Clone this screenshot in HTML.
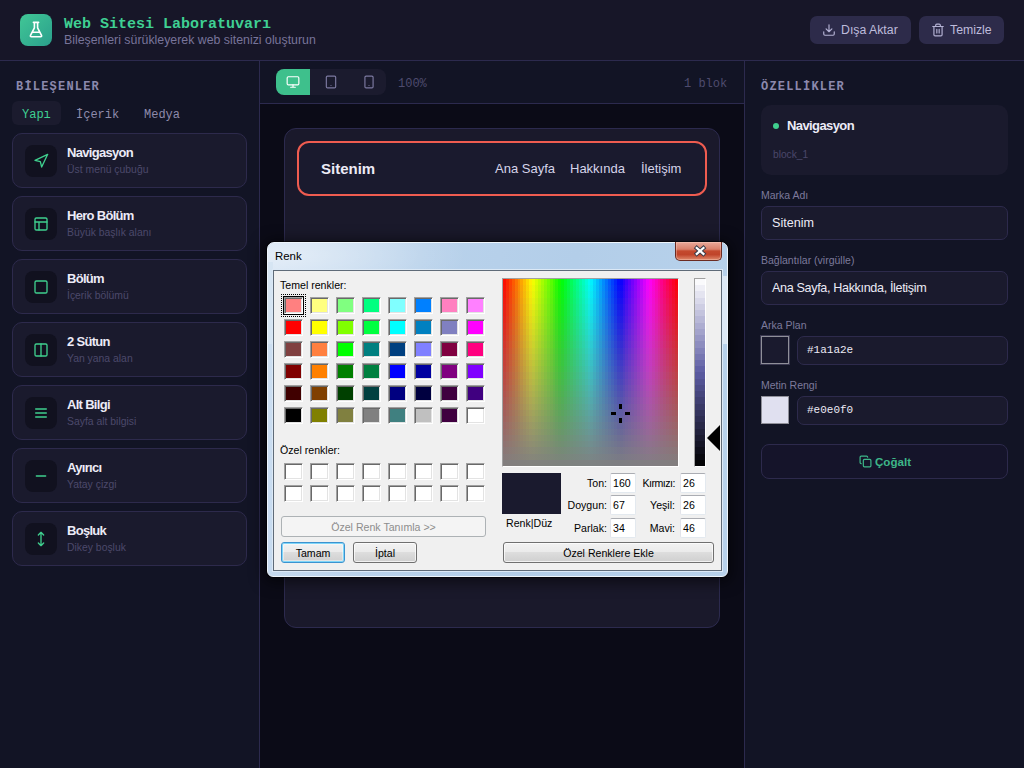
<!DOCTYPE html>
<html><head><meta charset="utf-8">
<style>
*{box-sizing:border-box;margin:0;padding:0}
html,body{width:1024px;height:768px;overflow:hidden;background:#0b0b17;font-family:"Liberation Sans",sans-serif}
.abs{position:absolute}
#hdr{position:absolute;left:0;top:0;width:1024px;height:61px;background:#171628;border-bottom:1px solid #2c2a4e}
#logo{position:absolute;left:20px;top:14px;width:32px;height:32px;border-radius:8px;background:linear-gradient(135deg,#41c796,#2a9f8c)}
#title{position:absolute;left:64px;top:15px;font-family:"Liberation Mono",monospace;font-weight:700;font-size:15px;color:#3fd093;line-height:20px;white-space:nowrap}
#sub{position:absolute;left:64px;top:32px;font-size:12.35px;color:#77749a;line-height:16px;white-space:nowrap}
.hbtn{position:absolute;top:16px;height:28px;border-radius:7px;background:#2d2b4a;color:#bebcdc;font-size:12.3px;line-height:28px;white-space:nowrap}
#left{position:absolute;left:0;top:61px;width:260px;height:707px;background:#121425;border-right:1px solid #2c2a4e}
.sect{position:absolute;font-family:"Liberation Mono",monospace;font-weight:700;font-size:12px;letter-spacing:1.2px;color:#8c89ad;line-height:14px;white-space:nowrap}
.tab{position:absolute;top:40px;height:24px;font-family:"Liberation Mono",monospace;font-size:12px;line-height:28px;color:#8e8bab;white-space:nowrap}
.card{position:absolute;left:12px;width:235px;height:55px;border:1px solid #2d2a4c;border-radius:10px;background:#1a1a2d}
.ibox{position:absolute;left:12px;top:11px;width:32px;height:32px;border-radius:8px;background:#11111f}
.ibox svg{position:absolute;left:8px;top:8px}
.ct{position:absolute;left:54px;top:11px;font-size:13px;font-weight:700;color:#ecebf7;letter-spacing:-0.7px;line-height:16px;white-space:nowrap}
.cs{position:absolute;left:54px;top:29px;font-size:10.4px;color:#4c496b;line-height:13px;white-space:nowrap}
#tool{position:absolute;left:260px;top:61px;width:484px;height:43px;background:#121425;border-bottom:1px solid #2c2a4e}
#canvas{position:absolute;left:260px;top:104px;width:484px;height:664px;background:#0b0b17}
#frame{position:absolute;left:284px;top:128px;width:436px;height:500px;border:1px solid #2c2a4e;border-radius:12px;background:#1a192b}
#nav{position:absolute;left:297px;top:141px;width:410px;height:55px;border:2px solid #ef5c50;border-radius:12px;background:#1a1a2e}
#right{position:absolute;left:744px;top:61px;width:280px;height:707px;background:#121425;border-left:1px solid #2c2a4e}
.lbl{position:absolute;left:16px;font-size:10.5px;color:#7d7a9c;line-height:13px;white-space:nowrap}
.inp{position:absolute;left:16px;width:247px;height:34px;border:1px solid #2d2a4c;border-radius:7px;background:#1a1a2d;color:#eceaf6;font-size:12.6px;line-height:32px;padding-left:10px;white-space:nowrap}

#dlg{position:absolute;left:0;top:0;width:1024px;height:768px;pointer-events:none}
#dlg .f{position:absolute;left:267px;top:242px;width:461px;height:335px;border-radius:7px 7px 6px 6px;background:linear-gradient(100deg,#cfe0f2 0%,#b9d2eb 30%,#b3cee9 60%,#b8d2eb 100%);box-shadow:0 0 0 1px rgba(0,0,0,.55),0 2px 14px 4px rgba(0,0,0,.5);border:1px solid #eef5fc}
#dlg .cl{position:absolute;left:273px;top:270px;width:449px;height:301px;background:#f0f0f0;border:1px solid #5f6b78;box-shadow:0 0 0 1px #dce9f6}
#dlg .t{position:absolute;font-family:"Liberation Sans",sans-serif;font-size:10.6px;line-height:12px;color:#000;white-space:nowrap}
#dlg .sw{position:absolute;display:block;width:19px;height:17px;border:1px solid;border-color:#a0a0a0 #fff #fff #a0a0a0;box-shadow:inset 1px 1px #696969,inset -1px -1px #e3e3e3}
#dlg .ed{position:absolute;width:26px;height:20px;background:#fff;border:1px solid;border-color:#abadb3 #e3e9ef #e3e9ef #e2e3ea;border-radius:2px}
#dlg .bt{position:absolute;height:21px;border:1px solid #707070;border-radius:3px;background:linear-gradient(#f2f2f2 0%,#ebebeb 45%,#dddddd 50%,#cfcfcf 100%);box-shadow:inset 0 0 0 1px rgba(255,255,255,.7);font-family:"Liberation Sans",sans-serif;font-size:10.6px;line-height:20px;text-align:center;color:#000;white-space:nowrap}
</style></head><body>
<div id="hdr">
  <div id="logo"><svg width="32" height="32" viewBox="0 0 32 32"><path d="M13.4 8.4h5.2M14.4 8.4v5.4l-3.9 7.6c-.35.7.05 1.3.8 1.3h9.4c.75 0 1.15-.6.8-1.3l-3.9-7.6V8.4M12.1 18.3h7.8" fill="none" stroke="#fff" stroke-width="1.6" stroke-linejoin="round" stroke-linecap="round"/></svg></div>
  <div id="title">Web Sitesi Laboratuvarı</div>
  <div id="sub">Bileşenleri sürükleyerek web sitenizi oluşturun</div>
  <div class="hbtn" style="left:810px;width:101px"><svg class="abs" style="left:12px;top:7px" width="14" height="14" viewBox="0 0 24 24" fill="none" stroke="#b4b2d4" stroke-width="2" stroke-linecap="round" stroke-linejoin="round"><path d="M21 15v4a2 2 0 0 1-2 2H5a2 2 0 0 1-2-2v-4M7 10l5 5 5-5M12 15V3"/></svg><span class="abs" style="left:31px">Dışa Aktar</span></div>
  <div class="hbtn" style="left:919px;width:85px"><svg class="abs" style="left:12px;top:7px" width="14" height="14" viewBox="0 0 24 24" fill="none" stroke="#b4b2d4" stroke-width="2" stroke-linecap="round" stroke-linejoin="round"><path d="M3 6h18M19 6v14c0 1-1 2-2 2H7c-1 0-2-1-2-2V6M8 6V4c0-1 1-2 2-2h4c1 0 2 1 2 2v2M10 11v6M14 11v6"/></svg><span class="abs" style="left:31px">Temizle</span></div>
</div>

<div id="left">
  <div class="sect" style="left:16px;top:19px">BİLEŞENLER</div>
  <div class="tab" style="left:12px;width:49px;background:#1b1b2e;border-radius:6px;color:#3fd093;padding-left:10px">Yapı</div>
  <div class="tab" style="left:76px">İçerik</div>
  <div class="tab" style="left:144px">Medya</div>
</div>
<div id="cards">
<div class="card" style="top:133px"><div class="ibox"><svg width="16" height="16" viewBox="0 0 24 24" fill="none" stroke="#3fcf8e" stroke-width="2" stroke-linecap="round" stroke-linejoin="round"><polygon points="3 11 22 2 13 21 11 13 3 11"/></svg></div><div class="ct">Navigasyon</div><div class="cs">Üst menü çubuğu</div></div>
<div class="card" style="top:196px"><div class="ibox"><svg width="16" height="16" viewBox="0 0 24 24" fill="none" stroke="#3fcf8e" stroke-width="2" stroke-linecap="round" stroke-linejoin="round"><rect x="3" y="3" width="18" height="18" rx="2"/><path d="M3 9h18M9 21V9"/></svg></div><div class="ct">Hero Bölüm</div><div class="cs">Büyük başlık alanı</div></div>
<div class="card" style="top:259px"><div class="ibox"><svg width="16" height="16" viewBox="0 0 24 24" fill="none" stroke="#3fcf8e" stroke-width="2" stroke-linecap="round" stroke-linejoin="round"><rect x="3" y="3" width="18" height="18" rx="2"/></svg></div><div class="ct">Bölüm</div><div class="cs">İçerik bölümü</div></div>
<div class="card" style="top:322px"><div class="ibox"><svg width="16" height="16" viewBox="0 0 24 24" fill="none" stroke="#3fcf8e" stroke-width="2" stroke-linecap="round" stroke-linejoin="round"><rect x="3" y="3" width="18" height="18" rx="2"/><path d="M12 3v18"/></svg></div><div class="ct">2 Sütun</div><div class="cs">Yan yana alan</div></div>
<div class="card" style="top:385px"><div class="ibox"><svg width="16" height="16" viewBox="0 0 24 24" fill="none" stroke="#3fcf8e" stroke-width="2" stroke-linecap="round" stroke-linejoin="round"><path d="M4 6h16M4 12h16M4 18h16"/></svg></div><div class="ct">Alt Bilgi</div><div class="cs">Sayfa alt bilgisi</div></div>
<div class="card" style="top:448px"><div class="ibox"><svg width="16" height="16" viewBox="0 0 24 24" fill="none" stroke="#3fcf8e" stroke-width="2" stroke-linecap="round" stroke-linejoin="round"><path d="M5 12h14"/></svg></div><div class="ct">Ayırıcı</div><div class="cs">Yatay çizgi</div></div>
<div class="card" style="top:511px"><div class="ibox"><svg width="16" height="16" viewBox="0 0 24 24" fill="none" stroke="#3fcf8e" stroke-width="2" stroke-linecap="round" stroke-linejoin="round"><path d="M12 2v20M8 6l4-4 4 4M8 18l4 4 4-4"/></svg></div><div class="ct">Boşluk</div><div class="cs">Dikey boşluk</div></div>
</div>

<div id="tool">
  <div class="abs" style="left:16px;top:8px;width:110px;height:26px;border-radius:8px;background:#1b1b2e;overflow:hidden">
    <div class="abs" style="left:0;top:0;width:34px;height:26px;background:#3ec08c"><svg class="abs" style="left:10px;top:6px" width="14" height="14" viewBox="0 0 24 24" fill="none" stroke="#fff" stroke-width="2" stroke-linecap="round" stroke-linejoin="round"><rect x="2" y="3" width="20" height="14" rx="2"/><path d="M8 21h8M12 17v4"/></svg></div>
    <svg class="abs" style="left:48px;top:6px" width="14" height="14" viewBox="0 0 24 24" fill="none" stroke="#7c79a0" stroke-width="2" stroke-linecap="round" stroke-linejoin="round"><rect x="4" y="2" width="16" height="20" rx="2"/><path d="M12 18h.01"/></svg>
    <svg class="abs" style="left:86px;top:6px" width="14" height="14" viewBox="0 0 24 24" fill="none" stroke="#7c79a0" stroke-width="2" stroke-linecap="round" stroke-linejoin="round"><rect x="5" y="2" width="14" height="20" rx="2"/><path d="M12 18h.01"/></svg>
  </div>
  <div class="abs" style="left:138px;top:15px;font-family:'Liberation Mono',monospace;font-size:12px;line-height:16px;color:#4e4b6e">100%</div>
  <div class="abs" style="left:424px;top:15px;font-family:'Liberation Mono',monospace;font-size:12px;line-height:16px;color:#4e4b6e">1 blok</div>
</div>
<div id="canvas"></div>
<div id="frame"></div>
<div id="nav">
  <div class="abs" style="left:22px;top:16px;font-size:15px;font-weight:700;color:#eceaf6;line-height:20px">Sitenim</div>
  <div class="abs" style="left:196px;top:17px;font-size:13px;color:#d6d4ea;line-height:18px;white-space:nowrap">Ana Sayfa</div>
  <div class="abs" style="left:271px;top:17px;font-size:13px;color:#d6d4ea;line-height:18px;white-space:nowrap">Hakkında</div>
  <div class="abs" style="left:342px;top:17px;font-size:13px;color:#d6d4ea;line-height:18px;white-space:nowrap">İletişim</div>
</div>

<div id="right">
  <div class="sect" style="left:16px;top:19px">ÖZELLİKLER</div>
  <div class="abs" style="left:16px;top:44px;width:247px;height:70px;border-radius:10px;background:#1a1a2d">
    <div class="abs" style="left:12px;top:18px;width:6px;height:6px;border-radius:50%;background:#3fcf8e"></div>
    <div class="abs" style="left:26px;top:13px;font-size:13px;font-weight:700;color:#ecebf7;letter-spacing:-0.6px;line-height:16px">Navigasyon</div>
    <div class="abs" style="left:12px;top:43px;font-size:10.2px;color:#4a476a;line-height:13px">block_1</div>
  </div>
  <div class="lbl" style="top:128px">Marka Adı</div>
  <div class="inp" style="top:145px">Sitenim</div>
  <div class="lbl" style="top:193px">Bağlantılar (virgülle)</div>
  <div class="inp" style="top:210px;letter-spacing:-0.35px">Ana Sayfa, Hakkında, İletişim</div>
  <div class="lbl" style="top:258px">Arka Plan</div>
  <div class="abs" style="left:16px;top:275px;width:28px;height:28px;border:1px solid #8f8f99;background:#1a1a2e;outline:1px solid #3a3850"></div>
  <div class="inp" style="left:52px;top:275px;width:211px;height:29px;line-height:27px;padding-left:9px;font-family:'Liberation Mono',monospace;font-size:11px">#1a1a2e</div>
  <div class="lbl" style="top:318px">Metin Rengi</div>
  <div class="abs" style="left:16px;top:335px;width:28px;height:28px;border:1px solid #8f8f99;background:#e0e0f0"></div>
  <div class="inp" style="left:52px;top:335px;width:211px;height:29px;line-height:27px;padding-left:9px;font-family:'Liberation Mono',monospace;font-size:11px">#e0e0f0</div>
  <div class="abs" style="left:16px;top:383px;width:247px;height:35px;border:1px solid #2d2a4c;border-radius:8px;background:#15142a">
    <svg class="abs" style="left:97px;top:10px" width="13" height="13" viewBox="0 0 24 24" fill="none" stroke="#3db688" stroke-width="2.2" stroke-linecap="round" stroke-linejoin="round"><rect x="8" y="8" width="14" height="14" rx="2"/><path d="M4 16c-1.1 0-2-.9-2-2V4c0-1.1.9-2 2-2h10c1.1 0 2 .9 2 2"/></svg>
    <div class="abs" style="left:113px;top:9px;font-size:11.6px;font-weight:700;color:#3db688;line-height:16px">Çoğalt</div>
  </div>
</div>

<div id="dlg">
<div class="f"></div>
<div class="abs" style="left:268px;top:243px;width:200px;height:60px;border-radius:6px 0 0 0;background:radial-gradient(ellipse at 10% 20%,rgba(255,255,255,.45),rgba(255,255,255,0) 70%)"></div>
<div class="abs" style="left:723px;top:276px;width:4px;height:68px;background:#dce8f4"></div>
<div class="abs" style="left:268px;top:262px;width:5px;height:82px;background:#d6e5f3"></div>
<div class="t" style="left:275px;top:249px;font-size:11.4px;line-height:14px">Renk</div>
<div class="abs" style="left:675px;top:242px;width:47px;height:19px;border:1px solid #6b2b22;border-top:none;border-radius:0 0 5px 5px;background:linear-gradient(#e9a99a 0%,#d9806b 40%,#c44a2e 50%,#c0442a 70%,#e08a6c 100%);box-shadow:inset 0 0 0 1px rgba(255,220,210,.35)"></div>
<svg class="abs" style="left:692px;top:244px" width="16" height="14" viewBox="0 0 16 14"><path d="M4.8 4l6.6 5.8M11.4 4l-6.6 5.8" stroke="#3a3d4a" stroke-width="4.2" stroke-linecap="square"/><path d="M4.8 4l6.6 5.8M11.4 4l-6.6 5.8" stroke="#fff" stroke-width="2.3" stroke-linecap="square"/></svg>
<div class="cl"></div>
<div class="t" style="left:280px;top:279px">Temel renkler:</div>
<i class="sw" style="left:284px;top:297px;background:#FF8080"></i>
<i class="sw" style="left:310px;top:297px;background:#FFFF80"></i>
<i class="sw" style="left:336px;top:297px;background:#80FF80"></i>
<i class="sw" style="left:362px;top:297px;background:#00FF80"></i>
<i class="sw" style="left:388px;top:297px;background:#80FFFF"></i>
<i class="sw" style="left:414px;top:297px;background:#0080FF"></i>
<i class="sw" style="left:440px;top:297px;background:#FF80C0"></i>
<i class="sw" style="left:466px;top:297px;background:#FF80FF"></i>
<i class="sw" style="left:284px;top:319px;background:#FF0000"></i>
<i class="sw" style="left:310px;top:319px;background:#FFFF00"></i>
<i class="sw" style="left:336px;top:319px;background:#80FF00"></i>
<i class="sw" style="left:362px;top:319px;background:#00FF40"></i>
<i class="sw" style="left:388px;top:319px;background:#00FFFF"></i>
<i class="sw" style="left:414px;top:319px;background:#0080C0"></i>
<i class="sw" style="left:440px;top:319px;background:#8080C0"></i>
<i class="sw" style="left:466px;top:319px;background:#FF00FF"></i>
<i class="sw" style="left:284px;top:341px;background:#804040"></i>
<i class="sw" style="left:310px;top:341px;background:#FF8040"></i>
<i class="sw" style="left:336px;top:341px;background:#00FF00"></i>
<i class="sw" style="left:362px;top:341px;background:#008080"></i>
<i class="sw" style="left:388px;top:341px;background:#004080"></i>
<i class="sw" style="left:414px;top:341px;background:#8080FF"></i>
<i class="sw" style="left:440px;top:341px;background:#800040"></i>
<i class="sw" style="left:466px;top:341px;background:#FF0080"></i>
<i class="sw" style="left:284px;top:363px;background:#800000"></i>
<i class="sw" style="left:310px;top:363px;background:#FF8000"></i>
<i class="sw" style="left:336px;top:363px;background:#008000"></i>
<i class="sw" style="left:362px;top:363px;background:#008040"></i>
<i class="sw" style="left:388px;top:363px;background:#0000FF"></i>
<i class="sw" style="left:414px;top:363px;background:#0000A0"></i>
<i class="sw" style="left:440px;top:363px;background:#800080"></i>
<i class="sw" style="left:466px;top:363px;background:#8000FF"></i>
<i class="sw" style="left:284px;top:385px;background:#400000"></i>
<i class="sw" style="left:310px;top:385px;background:#804000"></i>
<i class="sw" style="left:336px;top:385px;background:#004000"></i>
<i class="sw" style="left:362px;top:385px;background:#004040"></i>
<i class="sw" style="left:388px;top:385px;background:#000080"></i>
<i class="sw" style="left:414px;top:385px;background:#000040"></i>
<i class="sw" style="left:440px;top:385px;background:#400040"></i>
<i class="sw" style="left:466px;top:385px;background:#400080"></i>
<i class="sw" style="left:284px;top:407px;background:#000000"></i>
<i class="sw" style="left:310px;top:407px;background:#808000"></i>
<i class="sw" style="left:336px;top:407px;background:#808040"></i>
<i class="sw" style="left:362px;top:407px;background:#808080"></i>
<i class="sw" style="left:388px;top:407px;background:#408080"></i>
<i class="sw" style="left:414px;top:407px;background:#C0C0C0"></i>
<i class="sw" style="left:440px;top:407px;background:#400040"></i>
<i class="sw" style="left:466px;top:407px;background:#FFFFFF"></i>
<i class="sw" style="left:284px;top:463px;background:#fff"></i>
<i class="sw" style="left:310px;top:463px;background:#fff"></i>
<i class="sw" style="left:336px;top:463px;background:#fff"></i>
<i class="sw" style="left:362px;top:463px;background:#fff"></i>
<i class="sw" style="left:388px;top:463px;background:#fff"></i>
<i class="sw" style="left:414px;top:463px;background:#fff"></i>
<i class="sw" style="left:440px;top:463px;background:#fff"></i>
<i class="sw" style="left:466px;top:463px;background:#fff"></i>
<i class="sw" style="left:284px;top:485px;background:#fff"></i>
<i class="sw" style="left:310px;top:485px;background:#fff"></i>
<i class="sw" style="left:336px;top:485px;background:#fff"></i>
<i class="sw" style="left:362px;top:485px;background:#fff"></i>
<i class="sw" style="left:388px;top:485px;background:#fff"></i>
<i class="sw" style="left:414px;top:485px;background:#fff"></i>
<i class="sw" style="left:440px;top:485px;background:#fff"></i>
<i class="sw" style="left:466px;top:485px;background:#fff"></i>
<div class="abs" style="left:283px;top:296px;width:21px;height:19px;border:1px solid #000"></div>
<div class="abs" style="left:281px;top:294px;width:25px;height:23px;border:1px dotted #000"></div>
<div class="t" style="left:280px;top:444px">Özel renkler:</div>
<div class="bt" style="left:281px;top:516px;width:205px;color:#8d8d8d;border-color:#adb2b5;background:#f4f4f4;box-shadow:none">Özel Renk Tanımla &gt;&gt;</div>
<div class="bt" style="left:281px;top:542px;width:64px;border-color:#3c93cf;box-shadow:inset 0 0 0 1px #7fd6f9,inset 0 0 0 2px rgba(255,255,255,.4)">Tamam</div>
<div class="bt" style="left:353px;top:542px;width:64px">İptal</div>
<div class="abs" style="left:502px;top:278px;width:177px;height:189px;border:1px solid;border-color:#a0a0a0 #fff #fff #a0a0a0">
  <div class="abs" style="left:0;top:0;width:175px;height:187px;background:linear-gradient(180deg,rgba(128,128,128,0.017) 0.00px 6.23px,rgba(128,128,128,0.050) 6.23px 12.47px,rgba(128,128,128,0.083) 12.47px 18.70px,rgba(128,128,128,0.117) 18.70px 24.93px,rgba(128,128,128,0.150) 24.93px 31.17px,rgba(128,128,128,0.183) 31.17px 37.40px,rgba(128,128,128,0.217) 37.40px 43.63px,rgba(128,128,128,0.250) 43.63px 49.87px,rgba(128,128,128,0.283) 49.87px 56.10px,rgba(128,128,128,0.317) 56.10px 62.33px,rgba(128,128,128,0.350) 62.33px 68.57px,rgba(128,128,128,0.383) 68.57px 74.80px,rgba(128,128,128,0.417) 74.80px 81.03px,rgba(128,128,128,0.450) 81.03px 87.27px,rgba(128,128,128,0.483) 87.27px 93.50px,rgba(128,128,128,0.517) 93.50px 99.73px,rgba(128,128,128,0.550) 99.73px 105.97px,rgba(128,128,128,0.583) 105.97px 112.20px,rgba(128,128,128,0.617) 112.20px 118.43px,rgba(128,128,128,0.650) 118.43px 124.67px,rgba(128,128,128,0.683) 124.67px 130.90px,rgba(128,128,128,0.717) 130.90px 137.13px,rgba(128,128,128,0.750) 137.13px 143.37px,rgba(128,128,128,0.783) 143.37px 149.60px,rgba(128,128,128,0.817) 149.60px 155.83px,rgba(128,128,128,0.850) 155.83px 162.07px,rgba(128,128,128,0.883) 162.07px 168.30px,rgba(128,128,128,0.917) 168.30px 174.53px,rgba(128,128,128,0.950) 174.53px 180.77px,rgba(128,128,128,0.983) 180.77px 187.00px),linear-gradient(90deg,#ff0d00 0.00px 2.92px,#ff2600 2.92px 5.83px,#ff4000 5.83px 8.75px,#ff5900 8.75px 11.67px,#ff7300 11.67px 14.58px,#ff8c00 14.58px 17.50px,#ffa600 17.50px 20.42px,#ffbf00 20.42px 23.33px,#ffd900 23.33px 26.25px,#fff200 26.25px 29.17px,#f2ff00 29.17px 32.08px,#d9ff00 32.08px 35.00px,#bfff00 35.00px 37.92px,#a6ff00 37.92px 40.83px,#8cff00 40.83px 43.75px,#73ff00 43.75px 46.67px,#59ff00 46.67px 49.58px,#40ff00 49.58px 52.50px,#26ff00 52.50px 55.42px,#0dff00 55.42px 58.33px,#00ff0d 58.33px 61.25px,#00ff26 61.25px 64.17px,#00ff40 64.17px 67.08px,#00ff59 67.08px 70.00px,#00ff73 70.00px 72.92px,#00ff8c 72.92px 75.83px,#00ffa6 75.83px 78.75px,#00ffbf 78.75px 81.67px,#00ffd9 81.67px 84.58px,#00fff2 84.58px 87.50px,#00f2ff 87.50px 90.42px,#00d9ff 90.42px 93.33px,#00bfff 93.33px 96.25px,#00a6ff 96.25px 99.17px,#008cff 99.17px 102.08px,#0073ff 102.08px 105.00px,#0059ff 105.00px 107.92px,#0040ff 107.92px 110.83px,#0026ff 110.83px 113.75px,#000dff 113.75px 116.67px,#0d00ff 116.67px 119.58px,#2600ff 119.58px 122.50px,#4000ff 122.50px 125.42px,#5900ff 125.42px 128.33px,#7300ff 128.33px 131.25px,#8c00ff 131.25px 134.17px,#a600ff 134.17px 137.08px,#bf00ff 137.08px 140.00px,#d900ff 140.00px 142.92px,#f200ff 142.92px 145.83px,#ff00f2 145.83px 148.75px,#ff00d9 148.75px 151.67px,#ff00bf 151.67px 154.58px,#ff00a6 154.58px 157.50px,#ff008c 157.50px 160.42px,#ff0073 160.42px 163.33px,#ff0059 163.33px 166.25px,#ff0040 166.25px 169.17px,#ff0026 169.17px 172.08px,#ff000d 172.08px 175.00px)"></div>
</div>
<div class="abs" style="left:611px;top:412px;width:5px;height:3px;background:#000"></div>
<div class="abs" style="left:625px;top:412px;width:5px;height:3px;background:#000"></div>
<div class="abs" style="left:619px;top:404px;width:3px;height:5px;background:#000"></div>
<div class="abs" style="left:619px;top:418px;width:3px;height:5px;background:#000"></div>
<div class="abs" style="left:694px;top:278px;width:12px;height:189px;border:1px solid;border-color:#a0a0a0 #fff #fff #a0a0a0">
  <div class="abs" style="left:0;top:0;width:10px;height:187px;background:linear-gradient(180deg,#fafafc 0.00px 6.23px,#efeff6 6.23px 12.47px,#e4e4f0 12.47px 18.70px,#d9d9ea 18.70px 24.93px,#cecee3 24.93px 31.17px,#c3c3dd 31.17px 37.40px,#b8b8d7 37.40px 43.63px,#adadd1 43.63px 49.87px,#a3a3cb 49.87px 56.10px,#9898c5 56.10px 62.33px,#8d8dbf 62.33px 68.57px,#8282b9 68.57px 74.80px,#7777b2 74.80px 81.03px,#6c6cac 81.03px 87.27px,#6161a6 87.27px 93.50px,#59599e 93.50px 99.73px,#535393 99.73px 105.97px,#4d4d88 105.97px 112.20px,#46467d 112.20px 118.43px,#404072 118.43px 124.67px,#3a3a67 124.67px 130.90px,#34345c 130.90px 137.13px,#2e2e52 137.13px 143.37px,#282847 143.37px 149.60px,#22223c 149.60px 155.83px,#1c1c31 155.83px 162.07px,#151526 162.07px 168.30px,#0f0f1b 168.30px 174.53px,#090910 174.53px 180.77px,#030305 180.77px 187.00px)"></div>
</div>
<svg class="abs" style="left:706px;top:424px" width="15" height="29" viewBox="0 0 15 29"><path d="M1 14L14 1V27Z" fill="#000"/></svg>
<div class="abs" style="left:502px;top:473px;width:59px;height:41px;background:#1a1a2e"></div>
<div class="t" style="left:506px;top:517px">Renk|Düz</div>
<div class="t" style="left:560px;top:477px;width:47px;text-align:right">Ton:</div>
<div class="t" style="left:560px;top:499px;width:47px;text-align:right">Doygun:</div>
<div class="t" style="left:560px;top:522px;width:47px;text-align:right">Parlak:</div>
<div class="t" style="left:630px;top:477px;width:45px;text-align:right;letter-spacing:-0.5px">Kırmızı:</div>
<div class="t" style="left:630px;top:499px;width:45px;text-align:right">Yeşil:</div>
<div class="t" style="left:630px;top:522px;width:45px;text-align:right">Mavi:</div>
<div class="ed" style="left:610px;top:473px"></div><div class="t" style="left:613px;top:477px">160</div>
<div class="ed" style="left:610px;top:495px"></div><div class="t" style="left:613px;top:499px">67</div>
<div class="ed" style="left:610px;top:518px"></div><div class="t" style="left:613px;top:522px">34</div>
<div class="ed" style="left:680px;top:473px"></div><div class="t" style="left:683px;top:477px">26</div>
<div class="ed" style="left:680px;top:495px"></div><div class="t" style="left:683px;top:499px">26</div>
<div class="ed" style="left:680px;top:518px"></div><div class="t" style="left:683px;top:522px">46</div>
<div class="bt" style="left:503px;top:542px;width:211px">Özel Renklere Ekle</div>
</div>
</body></html>
